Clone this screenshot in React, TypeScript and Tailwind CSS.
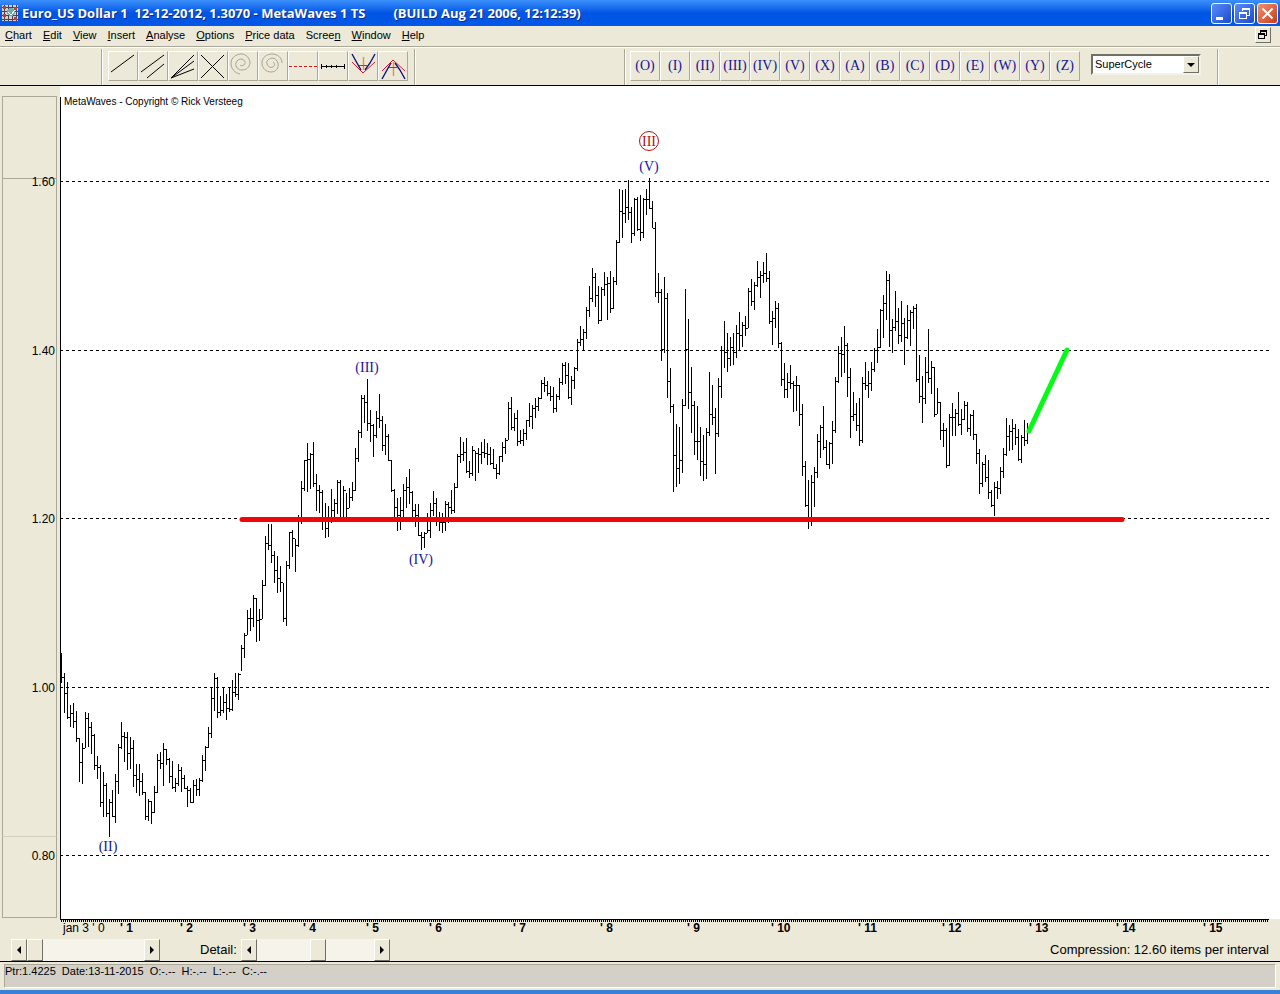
import React from 'react';

// one bar every 3 units: high, low, close
const BARS = `
653,683,677 673,713,693 682,719,717 705,727,713 703,728,721 711,742,738 738,782,762 743,784,748 712,748,718 713,747,727
722,754,735 734,770,765 756,779,767 765,807,802 772,817,785 783,817,813 799,837,802 790,817,816 774,823,781 744,794,747
722,749,736 732,762,737 732,770,753 737,769,748 740,787,775 764,793,779 764,796,781 773,795,792 792,820,816 799,821,801
801,824,812 786,813,792 754,793,760 752,769,763 743,786,749 749,765,759 758,783,776 761,789,787 778,792,783 764,786,770
767,792,778 775,789,788 786,807,790 788,803,802 780,803,785 779,796,789 778,796,780 755,782,760 746,771,747 727,748,733
688,738,698 673,711,678 677,718,712 696,716,710 688,713,702 694,720,708 688,712,709 680,711,692 673,697,694 673,700,674
645,671,648 633,658,635 610,635,618 608,631,618 595,627,598 598,642,620 609,641,619 580,619,585 536,586,543 524,550,545
524,563,555 551,583,570 556,593,578 566,592,582 583,622,618 561,626,565 532,569,532 530,557,538 539,572,545 515,547,518
481,524,488 460,491,460 443,492,459 453,489,454 442,487,483 474,511,490 485,513,492 490,530,518 503,538,528 506,537,520
489,523,510 499,522,503 480,514,482 480,520,518 486,522,490 493,518,508 488,508,497 482,501,490 448,491,458 430,462,432
395,438,398 395,423,402 379,431,423 410,442,425 424,457,435 411,438,418 394,428,420 416,451,445 424,455,436 434,461,460
460,492,490 489,519,507 498,531,515 497,530,510 484,522,490 477,508,487 469,504,492 491,520,510 504,527,515 504,536,535
532,550,537 532,548,533 513,533,530 503,538,510 491,516,503 498,526,520 512,531,522 513,533,522 501,531,504 502,523,507
490,514,510 483,513,487 454,488,456 437,463,454 442,461,452 438,473,471 461,478,473 446,476,450 451,481,453 448,473,454
442,464,452 439,458,453 443,465,454 447,465,463 449,469,468 464,479,473 456,475,456 442,462,447 438,454,440 402,440,408
397,430,427 413,431,418 410,446,441 430,444,440 429,446,433 420,440,420 403,427,416 405,429,408 398,418,406 397,411,398
380,399,383 377,392,385 381,396,393 386,401,396 387,413,408 394,412,396 378,400,382 363,385,365 362,384,375 363,399,397
376,405,380 367,389,368 339,371,342 326,346,339 329,350,332 307,339,310 286,317,298 268,302,277 273,307,295 286,324,320
287,321,289 272,296,284 277,320,283 271,313,308 277,309,281 240,285,242 189,243,211 190,238,213 189,223,207 180,220,212
207,243,233 198,236,199 197,231,229 195,241,232 198,238,199 189,215,199 178,209,208 201,228,228 222,297,292 273,303,292
289,361,349 277,353,298 293,398,381 368,413,406 404,492,455 424,487,468 427,484,460 399,473,405 289,406,349 319,409,392
367,433,405 401,455,441 406,460,441 427,476,461 435,481,464 428,479,432 372,436,414 385,425,417 408,474,433 378,437,386
346,398,350 321,368,352 333,372,358 337,366,347 333,365,352 325,358,333 312,350,335 322,347,325 316,336,328 288,328,291
279,306,301 282,310,285 261,287,277 271,298,275 262,283,273 253,282,278 271,324,321 311,345,318 301,328,308 303,348,343
342,386,379 363,398,389 373,398,382 365,389,383 381,412,385 376,411,385 385,426,414 404,476,466 461,507,505 480,529,521
475,526,482 467,507,472 434,478,441 425,458,427 406,450,447 440,465,464 442,469,443 421,464,430 377,433,381 346,383,353
337,377,354 326,373,345 343,397,377 368,438,416 392,421,414 403,431,425 398,446,440 377,443,383 362,390,385 371,398,383
362,391,369 348,372,350 329,363,347 309,348,310 295,338,303 271,320,280 274,347,330 319,353,327 291,331,321 308,344,335
301,342,323 318,365,337 305,339,320 310,346,312 306,329,308 304,382,379 355,403,396 376,423,398 357,404,372 329,383,378
361,394,367 367,417,414 388,414,402 402,440,430 423,447,430 428,468,465 414,466,417 403,436,417 409,436,413 392,426,424
409,435,419 401,420,405 402,432,428 414,436,415 410,440,434 434,464,453 449,494,483 462,487,464 455,482,477 460,499,492
490,507,505 482,516,487 481,499,488 467,494,471 448,478,454 418,456,436 425,451,431 419,450,428 424,445,437 429,461,459
435,463,437 420,446,440 423,444,431
`
  .trim()
  .split(/\s+/)
  .map((bar) => bar.split(',').map(Number));

const BAR_PATH = BARS.map(([high, low, close], i) => {
  const x = 61 + i * 3;
  const openTick = i > 0 ? `M${x - 1} ${BARS[i - 1][2]}h1v1h-1z` : '';
  return `M${x} ${high}h1V${low}h-1z${openTick}M${x + 1} ${close}h1v1h-1z`;
}).join('');

const GRID = [
  { y: 181, label: '1.60' },
  { y: 350, label: '1.40' },
  { y: 518, label: '1.20' },
  { y: 687, label: '1.00' },
  { y: 855, label: '0.80' },
];

const YEARS = [
  { x: 120, label: '1' },
  { x: 180, label: '2' },
  { x: 243, label: '3' },
  { x: 303, label: '4' },
  { x: 366, label: '5' },
  { x: 429, label: '6' },
  { x: 513, label: '7' },
  { x: 600, label: '8' },
  { x: 687, label: '9' },
  { x: 771, label: '10' },
  { x: 858, label: '11' },
  { x: 942, label: '12' },
  { x: 1029, label: '13' },
  { x: 1116, label: '14' },
  { x: 1203, label: '15' },
];

const WAVES = [
  { x: 108, y: 851, label: '(II)' },
  { x: 367, y: 372, label: '(III)' },
  { x: 421, y: 564, label: '(IV)' },
  { x: 649, y: 171, label: '(V)' },
];

const MENU = [
  ['', 'C', 'hart'],
  ['', 'E', 'dit'],
  ['', 'V', 'iew'],
  ['', 'I', 'nsert'],
  ['', 'A', 'nalyse'],
  ['', 'O', 'ptions'],
  ['', 'P', 'rice data'],
  ['Scree', 'n', ''],
  ['', 'W', 'indow'],
  ['', 'H', 'elp'],
];

const LABELS = ['O', 'I', 'II', 'III', 'IV', 'V', 'X', 'A', 'B', 'C', 'D', 'E', 'W', 'Y', 'Z'];

const TOOLS = [
  { name: 'Trend line', icon: <path d="M3 21L26 4" stroke="#000" /> },
  { name: 'Parallel lines', icon: <path d="M3 21L26 4M9 27L26 13" stroke="#000" /> },
  { name: 'Fan lines', icon: <path d="M3 27L26 4M3 27L26 10M3 27L26 18" stroke="#000" /> },
  { name: 'Cross lines', icon: <path d="M3 4L26 27M3 27L26 4" stroke="#000" /> },
  {
    name: 'Spiral left',
    icon: (
      <path
        d="M12 23C7 22 3 18 3 12C3 7 8 3 13 3C18 3 22 7 22 12C21 17 18 19 14 19C10 19 7 16 8 12C9 9 11 8 14 8C17 9 18 12 16 14C14 15 13 15 12 14"
        stroke="#a8a494"
      />
    ),
  },
  {
    name: 'Spiral right',
    icon: (
      <path
        d="M24 12C24 7 20 3 14 3C9 3 4 6 4 12C4 17 8 21 13 21C18 21 21 17 20 12C19 9 17 7 14 7C10 8 8 10 9 13C10 16 12 17 15 16C17 15 17 12 15 11"
        stroke="#a8a494"
      />
    ),
  },
  { name: 'Level', icon: <path d="M1 15.5H29" stroke="#d01818" strokeDasharray="3 2" /> },
  { name: 'Ruler', icon: <path d="M3 15.5H27M3.5 13v5M8.5 14v3M13.5 14v3M18.5 14v3M26.5 13v5" stroke="#000" /> },
  {
    name: 'Channel down',
    icon: (
      <>
        <path d="M4 3L9 12L13 19M27 3L22 12L17 19" stroke="#10107c" strokeWidth="1.4" />
        <path d="M4 11L15 22L27 11" stroke="#d81830" />
        <path d="M15.5 6V19" stroke="#f09020" strokeWidth="1.4" />
        <path d="M11 14.5H20" stroke="#208020" />
      </>
    ),
  },
  {
    name: 'Channel up',
    icon: (
      <>
        <path d="M4 28L9 19L13 12M27 28L22 19L17 12" stroke="#10107c" strokeWidth="1.4" />
        <path d="M4 20L15 9L27 20" stroke="#d81830" />
        <path d="M15.5 11V25" stroke="#f09020" strokeWidth="1.4" />
        <path d="M11 16.5H20" stroke="#208020" />
      </>
    ),
  },
];

const toolButton =
  'flex h-[30px] w-[30px] items-center justify-center border-t border-l border-r border-b border-t-white border-l-white border-r-[#aca899] border-b-[#aca899]';
const bevel = 'border border-t-white border-l-white border-r-[#716f64] border-b-[#716f64] bg-[#ece9d8]';

function Separator() {
  return <div className="h-9 w-[2px] shrink-0 border-l border-r border-l-[#aca899] border-r-white" />;
}

function TitleBar() {
  return (
    <header className="flex h-[26px] items-center bg-linear-to-b from-[#3c90fc] via-[#0054e4] to-[#0458e8] pr-[2px] pl-[2px] text-white">
      <svg width="16" height="16" className="mr-1 shrink-0" shapeRendering="crispEdges" aria-hidden="true">
        <rect width="16" height="16" fill="#c8d4d8" />
        <path d="M0 2.5H16M0 6.5H16M0 10.5H16M0 14.5H16M2.5 0V16M6.5 0V16M10.5 0V16M14.5 0V16" stroke="#50404c" />
        <path d="M1 1h3v3h-3zM12 2h3v3h-3zM1 9h3v3h-3zM12 12h3v3h-3z" fill="#c83838" />
        <circle cx="9" cy="7" r="4" fill="#68b0b0" />
        <path d="M6 7l3 3l4 -5" stroke="#fff" fill="none" />
      </svg>
      <h1 className="flex grow whitespace-pre font-['Open_Sans',sans-serif] text-[13px] leading-[26px] font-bold [text-shadow:1px_1px_#0a2c90]">
        <span>Euro_US Dollar 1  12-12-2012, 1.3070 - MetaWaves 1 TS</span>
        <span className="pl-7">(BUILD Aug 21 2006, 12:12:39)</span>
      </h1>
      <div className="flex gap-[2px]">
        <button aria-label="Minimize" className="h-[21px] w-[21px] rounded-[3px] border border-white bg-linear-to-br from-[#5c8cf8] to-[#1c48d0]">
          <svg width="19" height="19" aria-hidden="true">
            <path d="M4 13h7v3h-7z" fill="#fff" />
          </svg>
        </button>
        <button aria-label="Restore" className="h-[21px] w-[21px] rounded-[3px] border border-white bg-linear-to-br from-[#5c8cf8] to-[#1c48d0]">
          <svg width="19" height="19" fill="none" stroke="#fff" shapeRendering="crispEdges" aria-hidden="true">
            <path d="M7 7V4.5H14.5V11.5H12M7 5.5H14.5M4.5 8.5H11.5V14.5H4.5ZM4 9.5H12" />
          </svg>
        </button>
        <button aria-label="Close" className="h-[21px] w-[21px] rounded-[3px] border border-white bg-linear-to-br from-[#f09070] to-[#c83810]">
          <svg width="19" height="19" stroke="#fff" strokeWidth="2" aria-hidden="true">
            <path d="M4.5 4.5L14.5 14.5M14.5 4.5L4.5 14.5" />
          </svg>
        </button>
      </div>
    </header>
  );
}

function MenuBar() {
  return (
    <nav className="flex h-[21px] items-center gap-[11px] border-b border-[#aca899] pr-[9px] pb-[2px] pl-[5px]">
      {MENU.map(([before, key, after]) => (
        <a key={before + key + after} href="#" className="whitespace-nowrap">
          {before}
          <u className="underline-offset-1">{key}</u>
          {after}
        </a>
      ))}
      <button aria-label="Restore chart window" className={`ml-auto h-4 w-4 ${bevel}`}>
        <svg width="14" height="14" fill="none" stroke="#000" shapeRendering="crispEdges" aria-hidden="true">
          <path d="M4.500 5V3.500H10.500V7.500H9M4 2.500H11M2.500 6.500H8.500V10.500H2.500ZM2 5.500H9" />
        </svg>
      </button>
    </nav>
  );
}

function Toolbar() {
  return (
    <div className="flex h-[39px] items-start border-t border-b border-t-white border-b-black pt-px">
      <div className="w-[101px] shrink-0" />
      <Separator />
      <div className="flex pt-[2px] pr-[6px] pl-[5px]">
        {TOOLS.map((tool) => (
          <button key={tool.name} aria-label={tool.name} className={toolButton}>
            <svg width="28" height="28" viewBox="1 1 28 28" fill="none" className="shrink-0" aria-hidden="true">
              {tool.icon}
            </svg>
          </button>
        ))}
      </div>
      <Separator />
      <div className="w-[208px] shrink" />
      <Separator />
      <div className="flex pt-[2px] pl-[4px] font-['Liberation_Serif',serif] text-sm text-[#14149c]">
        {LABELS.map((label) => (
          <button key={label} className={toolButton}>
            ({label})
          </button>
        ))}
      </div>
      <div className="relative mt-[5px] mr-4 ml-[11px] w-[110px] shrink-0">
        <select
          aria-label="Wave degree"
          className="h-[21px] w-full appearance-none border-2 border-t-[#716f64] border-r-[#f4f2e8] border-b-[#f4f2e8] border-l-[#716f64] bg-white pl-[2px]"
        >
          <option>SuperCycle</option>
        </select>
        <span className={`pointer-events-none absolute top-[2px] right-[2px] flex h-[17px] w-4 items-center justify-center ${bevel}`}>
          <svg width="8" height="4" aria-hidden="true">
            <path d="M0 0H8L4 4Z" />
          </svg>
        </span>
      </div>
      <Separator />
    </div>
  );
}

function PriceAxis() {
  return (
    <aside className="relative flex w-[60px] shrink-0 flex-col pt-[10px] pr-[3px] pb-px pl-[2px]">
      <div className="h-[83px] border border-[#aca899]" />
      <div className="grow border-r border-l border-[#aca899]" />
      <div className="h-[82px] border border-[#aca899] border-t-[#d4d0c0]" />
      <svg className="absolute inset-0 h-full w-full text-xs" aria-hidden="true">
        <g transform="translate(0 -86)" textAnchor="end">
          {GRID.map((line) => (
            <text key={line.label} x="55" y={line.y + 5}>
              {line.label}
            </text>
          ))}
        </g>
      </svg>
    </aside>
  );
}

function PriceChart() {
  return (
    <div className="grow bg-white pr-[10px]">
      <svg className="block h-[833px] w-full" role="img" aria-label="Euro / US Dollar price chart">
        <g transform="translate(0 -86)" shapeRendering="crispEdges">
          {GRID.map((line) => (
            <line key={line.label} x1="0" x2="100%" y1={line.y + 0.5} y2={line.y + 0.5} stroke="#000" strokeDasharray="3 3" />
          ))}
        </g>
        <g transform="translate(-60 -86)">
          <path d="M60 97h1V919h-1z" />
          <path d={BAR_PATH} shapeRendering="crispEdges" />
          <path d="M242 519.5H1122" stroke="#f00808" strokeWidth="5" strokeLinecap="round" />
          <path d="M1029 431L1067 350" stroke="#04fc14" strokeWidth="5" strokeLinecap="round" />
          <text x="64" y="105" className="text-[10px]">
            MetaWaves - Copyright © Rick Versteeg
          </text>
          <g className="font-['Liberation_Serif',serif] text-sm" textAnchor="middle" fill="#14149c">
            {WAVES.map((wave) => (
              <text key={wave.label} x={wave.x} y={wave.y}>
                {wave.label}
              </text>
            ))}
            <text x="649" y="146" fill="#b81010">
              III
            </text>
          </g>
          <circle cx="649" cy="141" r="9.5" fill="none" stroke="#b81010" />
        </g>
      </svg>
    </div>
  );
}

function TimeAxis() {
  return (
    <div className="pr-[11px] pl-[60px]">
      <svg className="block h-[18px] w-full text-xs" role="img" aria-label="Years">
        <path d="M0 .5H3000" stroke="#000" shapeRendering="crispEdges" />
        <path d="M1 2H3000" stroke="#000" strokeWidth="2" strokeDasharray="1 1" shapeRendering="crispEdges" />
        <g transform="translate(-60 0)" className="whitespace-pre">
          <text x="63" y="13">
            jan 3 ' 0
          </text>
          <g className="font-bold">
            {YEARS.map((year) => (
              <text key={year.label} x={year.x} y="13">
                {`' ${year.label}`}
              </text>
            ))}
          </g>
        </g>
      </svg>
    </div>
  );
}

function ScrollBar({ id, label, value }: { id: string; label: string; value: number }) {
  return (
    <div className="flex h-[22px] w-[149px]">
      <button aria-label={`${label} left`} className={`flex w-4 items-center justify-center ${bevel}`}>
        <svg width="4" height="8" aria-hidden="true">
          <path d="M4 0V8L0 4Z" />
        </svg>
      </button>
      <input
        id={id}
        type="range"
        aria-label={label}
        defaultValue={value}
        className="h-full w-[117px] appearance-none bg-[#f5f3ea] [&::-webkit-slider-thumb]:h-[22px] [&::-webkit-slider-thumb]:w-4 [&::-webkit-slider-thumb]:appearance-none [&::-webkit-slider-thumb]:border [&::-webkit-slider-thumb]:border-t-white [&::-webkit-slider-thumb]:border-r-[#716f64] [&::-webkit-slider-thumb]:border-b-[#716f64] [&::-webkit-slider-thumb]:border-l-white [&::-webkit-slider-thumb]:bg-[#ece9d8]"
      />
      <button aria-label={`${label} right`} className={`flex w-4 items-center justify-center ${bevel}`}>
        <svg width="4" height="8" aria-hidden="true">
          <path d="M0 0V8L4 4Z" />
        </svg>
      </button>
    </div>
  );
}

function Controls() {
  return (
    <div className="flex items-center border-b border-black pt-[2px] pr-[11px] pl-[11px] text-[13px]">
      <ScrollBar id="position" label="Position" value={0} />
      <label htmlFor="detail" className="pr-1 pl-10">
        Detail:
      </label>
      <ScrollBar id="detail" label="Detail" value={53} />
      <span className="ml-auto">Compression: 12.60 items per interval</span>
    </div>
  );
}

export default function App() {
  return (
    <div className="flex min-h-screen flex-col bg-[#ece9d8] font-['Liberation_Sans',Arial,sans-serif] text-[11px] text-black">
      <TitleBar />
      <MenuBar />
      <Toolbar />
      <main className="flex">
        <PriceAxis />
        <PriceChart />
      </main>
      <TimeAxis />
      <Controls />
      <footer className="border-b-4 border-[#3a80d8] pt-[2px] pr-1 pb-[2px] pl-1">
        <div className="h-6 border border-t-[#aca899] border-r-white border-b-white border-l-[#aca899] bg-[#d4d0c8] leading-[13px] whitespace-pre">
          Ptr:1.4225  Date:13-11-2015  O:-.--  H:-.--  L:-.--  C:-.--
        </div>
      </footer>
    </div>
  );
}
